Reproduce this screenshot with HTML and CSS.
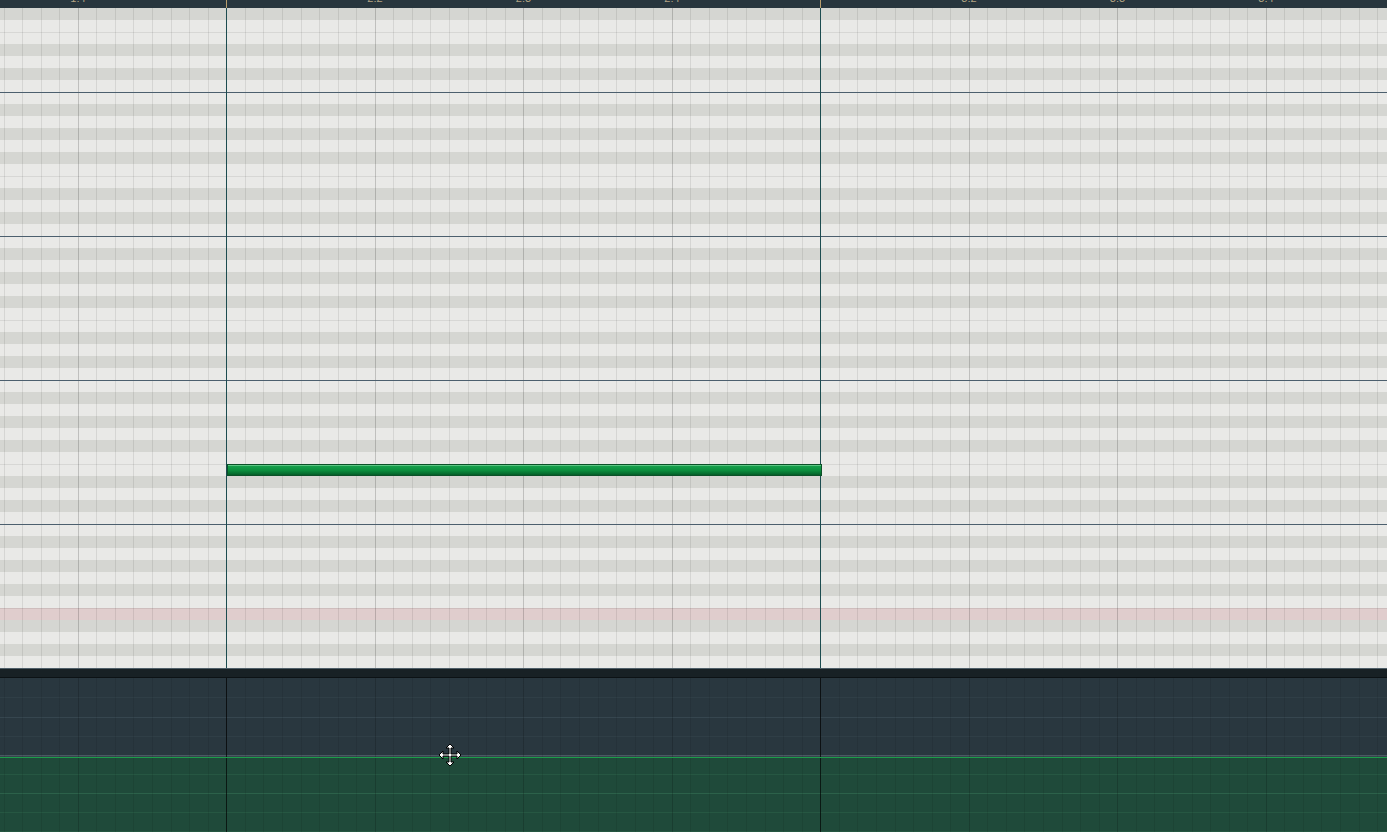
FILE: index.html
```html
<!DOCTYPE html>
<html lang="en">
<head>
    <meta charset="UTF-8">
    <meta name="viewport" content="width=device-width, initial-scale=1.0">
    <title>Piano roll</title>
    <link rel="stylesheet" href="styles.css">
</head>
<body>
    <div class="ruler">
        <span class="mark">1:4</span>
        <span class="mark"></span>
        <span class="mark">2:2</span>
        <span class="mark">2:3</span>
        <span class="mark">2:4</span>
        <span class="mark"></span>
        <span class="mark">3:2</span>
        <span class="mark">3:3</span>
        <span class="mark">3:4</span>
    </div>

    <div class="roll">
        <div class="note"></div>
    </div>

    <div class="divider"></div>

    <div class="events">
        <div class="level"></div>
    </div>

    <svg class="cursor" width="24" height="24" viewBox="0 0 24 24">
        <polygon points="12,1 16,5 13,5 13,11 19,11 19,8 23,12 19,16 19,13 13,13 13,19 16,19 12,23 8,19 11,19 11,13 5,13 5,16 1,12 5,8 5,11 11,11 11,5 8,5" fill="#fff" stroke="#000" stroke-width="1" stroke-linejoin="miter"/>
    </svg>
</body>
</html>
```

FILE: styles.css
```css
* {
    box-sizing: border-box;
}

:root {
    /* grid columns: 1 beat = 148.5px, 8 sub lines per beat */
    --steps: repeating-linear-gradient(to right, transparent 0 3.55px, rgba(0, 0, 0, .085) 3.55px 4.55px, transparent 4.55px 18.5625px);
    --beats: repeating-linear-gradient(to right, transparent 0 77.8px, rgba(0, 0, 0, .1) 77.8px 78.8px, transparent 78.8px 148.5px);
}

html, body {
    margin: 0;
    padding: 0;
    background: #29373f;
}

body {
    width: 1387px;
    height: 832px;
    overflow: hidden;
    position: relative;
    font-family: "Liberation Sans", Arial, sans-serif;
}

.ruler {
    display: flex;
    height: 8px;
    padding-left: 3.75px;
    overflow: hidden;
    background:
        linear-gradient(to right, transparent 226px, #b99d6d 226px 227px, transparent 227px 820px, #b99d6d 820px 821px, transparent 821px),
        #28363e;
}

.mark {
    flex: 0 0 148.5px;
    margin-top: -7px;
    text-align: center;
    font-size: 11px;
    line-height: 11px;
    color: #b3a383;
}

.roll {
    position: relative;
    height: 660px;
    background:
        linear-gradient(to right, transparent 226px, #1c4c50 226px 227px, transparent 227px 820px, #1c4c50 820px 821px, transparent 821px),
        linear-gradient(to bottom, #4c5f6e 0 1px, transparent 1px) 0 84px / 100% 144px,
        var(--beats),
        var(--steps),
        linear-gradient(to bottom, rgba(0, 0, 0, .08) 0 1px, transparent 1px) 0 24px / 100% 144px,
        linear-gradient(to bottom, transparent 600px, #e0cdcd 600px 612px, transparent 612px),
        linear-gradient(to bottom,
            #e9e9e7 0 12px, #d5d6d2 12px 24px, #e9e9e7 24px 36px, #d5d6d2 36px 48px,
            #e9e9e7 48px 60px, #d5d6d2 60px 72px, #e9e9e7 72px 96px, #d5d6d2 96px 108px,
            #e9e9e7 108px 120px, #d5d6d2 120px 132px, #e9e9e7 132px 144px) 0 84px / 100% 144px;
}

.note {
    position: absolute;
    left: 227px;
    top: 456px;
    width: 595px;
    height: 12px;
    border: 1px solid #0b5128;
    background: linear-gradient(to bottom, #5cc583 0 1px, #16a04c 1px, #0b8d3d 55%, #067030 85%, #055c27);
}

.divider {
    height: 10px;
    background: #182125;
    border-top: 1px solid #4e5e68;
    border-bottom: 1px solid #0c1215;
}

.events {
    display: flex;
    flex-direction: column;
    height: 154px;
    background:
        linear-gradient(to right, transparent 226px, rgba(0, 0, 0, .65) 226px 227px, transparent 227px 820px, rgba(0, 0, 0, .65) 820px 821px, transparent 821px),
        var(--beats),
        var(--steps),
        linear-gradient(to bottom,
            transparent 19px, #2f3e46 19px 20px,
            transparent 20px 39px, #36464f 39px 40px,
            transparent 40px 58px, #2f3e46 58px 59px,
            transparent 59px 77px, #4a5962 77px 78px, #36444c 78px 79px, transparent 79px),
        #29373f;
}

.level {
    margin-top: auto;
    height: 75px;
    border-top: 1px solid #1c9c4a;
    background:
        linear-gradient(to right, transparent 226px, rgba(0, 0, 0, .6) 226px 227px, transparent 227px 820px, rgba(0, 0, 0, .6) 820px 821px, transparent 821px),
        var(--beats),
        var(--steps),
        linear-gradient(to bottom,
            transparent 16px, #265742 16px 17px,
            transparent 17px 35px, #2c614a 35px 36px,
            transparent 36px 54px, #265742 54px 55px,
            transparent 55px 73px, #265742 73px 74px, transparent 74px),
        #1f4a3a;
}

.cursor {
    position: absolute;
    left: 438px;
    top: 743px;
}
```
